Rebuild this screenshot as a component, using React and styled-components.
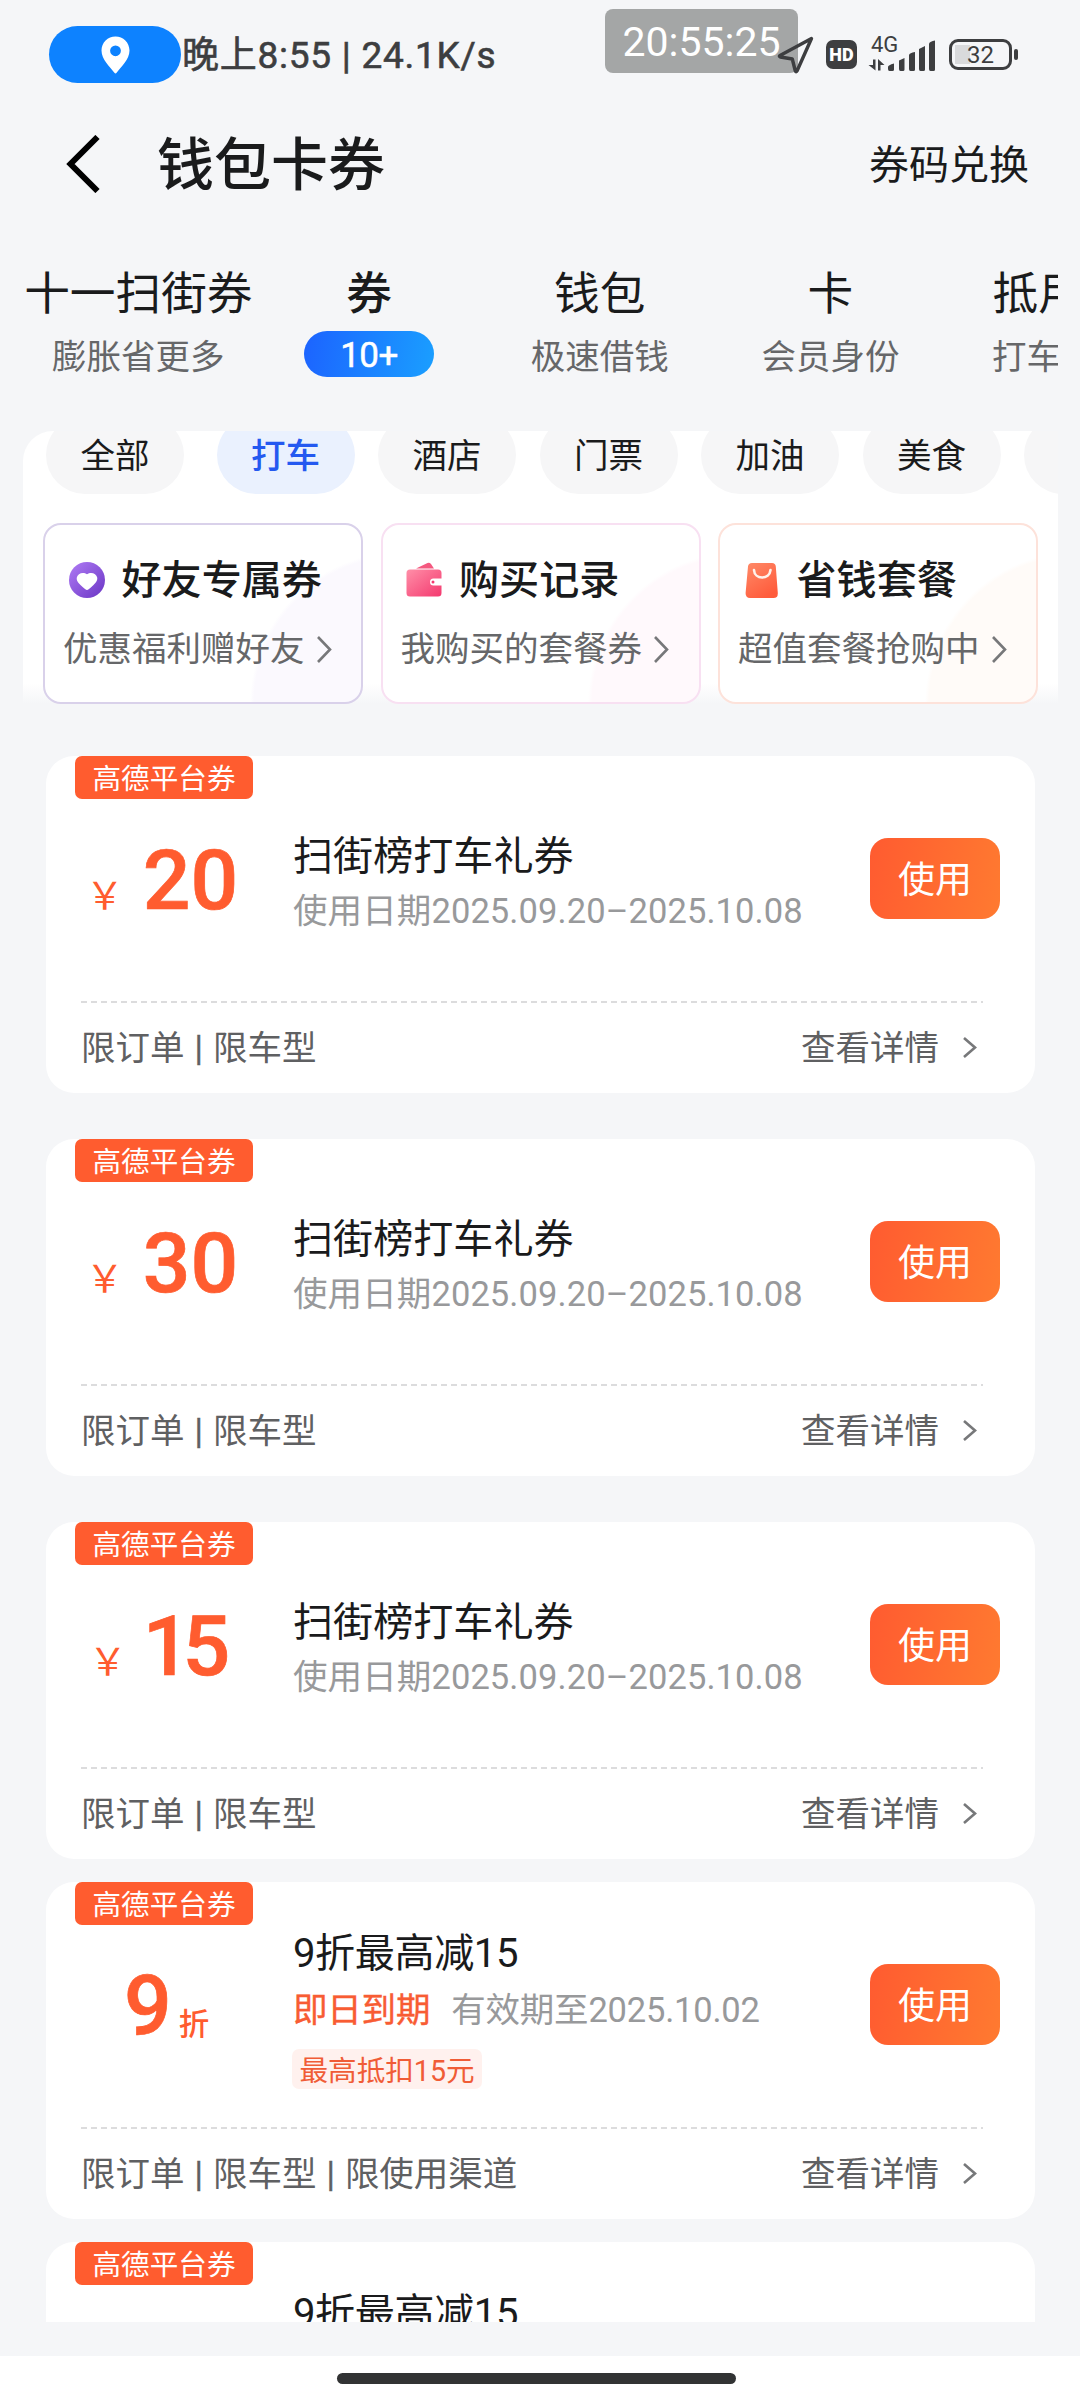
import React from 'react';
import styled, { createGlobalStyle, css } from 'styled-components';

const GlobalStyle = createGlobalStyle`
  * { box-sizing: border-box; }
  body {
    margin: 0;
    background: #f5f6f8;
    font-family: Roboto, "Noto Sans CJK SC", sans-serif;
    color: #1a1b1c;
  }
  button { font-family: inherit; border: 0; padding: 0; }
`;

const Screen = styled.div`
  width: 1080px;
  height: 2400px;
  display: flex;
  flex-direction: column;
  overflow: hidden;
  background: #f5f6f8;
`;

/* ---------- status bar ---------- */

const StatusBar = styled.div`
  position: relative;
  height: 109px;
  flex: none;
  display: flex;
  align-items: center;
  padding: 0 62px 0 49px;
  color: #3d3e40;
`;

const LocationPill = styled.div`
  width: 132px;
  height: 57px;
  border-radius: 29px;
  background: #0d82ff;
  display: flex;
  align-items: center;
  justify-content: center;
`;

const StatusText = styled.span`
  margin-left: 1px;
  font-size: 37px;
  line-height: 56px;
  font-weight: 400;
  -webkit-text-stroke: 0.6px currentColor;
  letter-spacing: 0.75px;
  white-space: pre;
  padding-top: 3px;
`;

const StatusIcons = styled.div`
  margin-left: auto;
  display: flex;
  align-items: center;
  position: relative;
  z-index: 1;
`;

const HdBadge = styled.span`
  width: 31px;
  height: 29px;
  margin-left: 12px;
  border-radius: 7px;
  background: #3d3e40;
  color: #fff;
  font-size: 18px;
  font-weight: 900;
  line-height: 30px;
  text-align: center;
`;

const Signal = styled.div`
  width: 68px;
  height: 34px;
  margin-left: 11px;
  display: grid;
  grid-template-columns: 19px 1fr;
  grid-template-rows: 19px 15px;
`;

const NetworkType = styled.span`
  grid-area: 1 / 1;
  padding-left: 3px;
  font-size: 22px;
  font-weight: 400;
  line-height: 13px;
  letter-spacing: -0.2px;
`;

const DataArrows = styled.svg`
  grid-area: 2 / 1;
`;

const Bars = styled.svg`
  grid-area: 1 / 2 / 3 / 3;
`;

const Battery = styled.div`
  width: 63px;
  height: 31px;
  margin-left: 13px;
  border: 3px solid #3d3e40;
  border-radius: 9px;
  background: linear-gradient(#d9dadc, #d9dadc) 3px 3px / 15px 19px no-repeat;
  font-size: 24px;
  font-weight: 400;
  line-height: 27px;
  text-align: center;
`;

const BatteryTip = styled.span`
  width: 4px;
  height: 11px;
  margin-left: 2px;
  border-radius: 2px;
  background: #3d3e40;
`;

const ClockOverlay = styled.div`
  position: absolute;
  left: 605px;
  top: 9px;
  width: 193px;
  height: 64px;
  border-radius: 8px;
  background: #a4a6a6;
  color: #fff;
  font-size: 41px;
  line-height: 67px;
  text-align: center;
`;

/* ---------- header ---------- */

const Header = styled.header`
  height: 110px;
  flex: none;
  display: flex;
  align-items: center;
  padding: 0 51px 0 66px;
`;

const PageTitle = styled.h1`
  margin: 3px 0 0 56px;
  font-size: 57px;
  line-height: 70px;
  font-weight: 500;
`;

const HeaderAction = styled.span`
  margin: 3px 0 0 auto;
  font-size: 40px;
  line-height: 60px;
`;

/* ---------- tabs ---------- */

const Tabs = styled.nav`
  height: 212px;
  flex: none;
  margin: 0 22px;
  padding: 46px 0 0 1px;
  display: flex;
  overflow: hidden;
`;

const Tab = styled.div`
  width: 230.7px;
  flex: none;
  display: flex;
  flex-direction: column;
  align-items: center;
  white-space: nowrap;
`;

const TabTitle = styled.span`
  font-size: 45.7px;
  line-height: 59px;
  margin-bottom: 7px;
  font-weight: ${(p) => (p.$active ? 500 : 400)};
`;

const TabHint = styled.span`
  font-size: 34.5px;
  line-height: 52px;
  color: #666769;
`;

const TabCount = styled.span`
  width: 130px;
  height: 46px;
  border-radius: 23px;
  background: linear-gradient(100deg, #1c63ff, #1a9fff);
  color: #fff;
  font-size: 35px;
  -webkit-text-stroke: 0.5px currentColor;
  line-height: 49px;
  letter-spacing: -0.5px;
  text-align: center;
`;

/* ---------- filter panel ---------- */

const Panel = styled.section`
  height: 273px;
  flex: none;
  margin: 0 22px 0 23px;
  border-radius: 30px 0 0 0;
  overflow: hidden;
  background: linear-gradient(#fff 0, #fff 252px, #f5f6f8 273px);
`;

const Chips = styled.div`
  display: flex;
  gap: 23.5px;
  margin-top: -15px;
  padding-left: 23px;
`;

const Chip = styled.span`
  width: 138px;
  height: 78px;
  flex: none;
  border-radius: 39px;
  background: #f6f6f7;
  font-size: 34.5px;
  line-height: 81px;
  text-align: center;
  ${(p) =>
    p.$active &&
    css`
      margin-left: 9px;
      background: #eaf1fe;
      color: #2459f0;
      font-weight: 500;
    `}
`;

const Features = styled.div`
  display: flex;
  gap: 17.5px;
  margin-top: 29px;
  padding-left: 20px;
`;

const Feature = styled.div`
  width: 320px;
  height: 181px;
  flex: none;
  border: 2px solid ${(p) => p.$border};
  border-radius: 18px;
  padding: 26px 0 0 18px;
  background: radial-gradient(circle at 357px 179px, ${(p) => p.$tint} 0, ${(p) => p.$tint} 148px, #fff 152px);
`;

const FeatureTitle = styled.div`
  display: flex;
  align-items: center;
  gap: 16px;
  padding-left: 2.5px;
  font-size: 40.1px;
  line-height: 60px;
  font-weight: 500;

  svg { flex: none; margin-top: -3px; }
`;

const FeatureHint = styled.div`
  display: flex;
  align-items: center;
  gap: 12px;
  margin-top: 10px;
  font-size: 34.5px;
  line-height: 56px;
  color: #666769;
`;

/* ---------- coupons ---------- */

const List = styled.main`
  height: 1618px;
  flex: none;
  overflow: hidden;
  padding: 52px 45px 0 46px;
`;

const Coupon = styled.article`
  height: 337px;
  margin-bottom: ${(p) => (p.$tight ? 23 : 46)}px;
  border-radius: 28px;
  background: #fff;
`;

const Source = styled.div`
  width: 178px;
  height: 43px;
  margin-left: 29px;
  border-radius: 7px;
  background: #ff5c2f;
  color: #fff;
  font-size: 28.6px;
  line-height: 46px;
  text-align: center;
`;

const CouponBody = styled.div`
  height: 202px;
  display: flex;
  align-items: flex-start;
  padding-right: 35px;
`;

const Amount = styled.div`
  width: ${(p) => (p.$discount ? 241 : 232)}px;
  margin: 40px ${(p) => (p.$discount ? 6 : 15)}px 0 0;
  display: flex;
  justify-content: center;
  align-items: baseline;
  color: #ff5c2f;
  line-height: 84px;
`;

const Yen = styled.span`
  font-size: 38px;
  margin-right: 19px;
`;

const Value = styled.span`
  font-size: 84px;
  font-weight: 500;
  -webkit-text-stroke: 0.7px currentColor;
  ${(p) =>
    p.$narrow &&
    css`
      letter-spacing: -8px;
      margin: 0 13px 0 -3px;
    `}
`;

const Unit = styled.span`
  font-size: 30.5px;
  font-weight: 500;
  margin-left: 7px;
`;

const Info = styled.div`
  flex: 1;
  padding-top: ${(p) => (p.$dense ? 1 : 30)}px;
`;

const CouponTitle = styled.div`
  font-size: 40.1px;
  line-height: 56px;
  letter-spacing: ${(p) => (p.$dense ? '-0.4px' : '0')};
`;

const Validity = styled.div`
  display: flex;
  gap: 21px;
  margin-top: ${(p) => (p.$dense ? 0 : -2)}px;
  font-size: 34.5px;
  line-height: 56px;
  letter-spacing: ${(p) => (p.$dense ? '-0.2px' : '0.1px')};
  color: #98999b;
`;

const Expiring = styled.span`
  color: #f85c33;
  -webkit-text-stroke: 0.4px currentColor;
`;

const Cap = styled.span`
  display: block;
  width: 190px;
  height: 40px;
  margin: 11px 0 0 -1px;
  border-radius: 7px;
  background: #fff1ee;
  color: #f05c36;
  font-size: 28.6px;
  line-height: 45px;
  text-align: center;
`;

const UseButton = styled.button`
  width: 130px;
  height: 81px;
  margin-top: 39px;
  border-radius: 18px;
  background: linear-gradient(100deg, #ff5b30, #ff7a30);
  color: #fff;
  font-size: 37px;
  line-height: 85px;
`;

const Dashes = styled.div`
  height: 2px;
  margin: 0 52px 0 35px;
  background: repeating-linear-gradient(90deg, #dcdcdd 0 6px, transparent 6px 10px);
`;

const CouponFooter = styled.div`
  display: flex;
  align-items: center;
  justify-content: space-between;
  padding: 17px 58px 0 35px;
  font-size: 34.5px;
  line-height: 56px;
  color: #5f6062;
`;

const Limits = styled.div`
  display: flex;
`;

const Limit = styled.span`
  & + &::before {
    content: '|';
    padding: 0 10px 0 10px;
    -webkit-text-stroke: 0.4px currentColor;
  }
`;

const Details = styled.span`
  display: flex;
  align-items: center;
  gap: 24px;

  svg { margin-top: -1px; }
`;

/* ---------- system navigation ---------- */

const NavSpacer = styled.div`
  height: 34px;
  flex: none;
`;

const HomeArea = styled.footer`
  flex: 1;
  background: #fff;
  display: flex;
  justify-content: center;
  padding: 17px 7px 0 0;
`;

const HomeBar = styled.div`
  width: 399px;
  height: 11px;
  border-radius: 6px;
  background: #323334;
`;

/* ---------- icons ---------- */

const PinIcon = () => (
  <svg width="29" height="38" viewBox="0 0 29 38">
    <path
      fill="#fff"
      fillRule="evenodd"
      d="M14.5 0.5C6.8 0.5 0.5 6.6 0.5 14.6C0.5 23.5 9 31.2 13.4 36.8Q14.5 38 15.6 36.8C20 31.2 28.5 23.5 28.5 14.6C28.5 6.6 22.2 0.5 14.5 0.5ZM14.5 9.4A5.4 5.4 0 1 1 14.5 20.2A5.4 5.4 0 1 1 14.5 9.4Z"
    />
  </svg>
);

const NavArrowIcon = () => (
  <svg width="37" height="38" viewBox="0 0 37 38" fill="none">
    <path d="M34.5 2.5L3 19.5Q1.6 20.5 3.4 21L15.3 23L18.3 35Q19 36.8 20 35Z" stroke="#3d3e40" strokeWidth="3.4" strokeLinejoin="round" />
  </svg>
);

const SignalBars = () => (
  <Bars width="49" height="34" viewBox="0 0 49 34" fill="#3d3e40">
    <path d="M1 31V29Q1 27 7 25.5V31.5Q7 33 5.5 33H2.5Q1 33 1 31Z" />
    <path d="M12 31V22.5L17.5 20V31.5Q17.5 33 16 33H13.5Q12 33 12 31Z" />
    <path d="M22 31V17Q22.5 15 28 14V31.5Q28 33 26.5 33H23.5Q22 33 22 31Z" />
    <path d="M32 31V11L38 8V31.5Q38 33 36.5 33H33.5Q32 33 32 31Z" />
    <path d="M42 31V5.5Q43 3.5 48 2.5V31.5Q48 33 46.5 33H43.5Q42 33 42 31Z" />
  </Bars>
);

const TransferArrows = () => (
  <DataArrows width="18" height="15" viewBox="0 0 18 15" fill="#3d3e40">
    <path d="M5 2.5H7.5V13.5L0.5 8H5Z" />
    <path d="M10 13.5V2L16.5 8H12.5V13.5Z" />
  </DataArrows>
);

const BackIcon = () => (
  <svg width="35" height="58" viewBox="0 0 35 58" fill="none">
    <path d="M31.5 2L4.5 29L31.5 56" stroke="#000" strokeWidth="6" />
  </svg>
);

const Chevron = ({ width, height }) => (
  <svg width={width} height={height} fill="none" stroke="#77787a" strokeWidth="2.6">
    <path d={`M1 1L${width - 2} ${height / 2}L1 ${height - 1}`} />
  </svg>
);

const HeartIcon = () => (
  <svg width="40" height="40" viewBox="0 0 40 40">
    <defs>
      <linearGradient id="heart" x1="0" y1="0" x2="1" y2="1">
        <stop offset="0" stopColor="#b07cf5" />
        <stop offset="1" stopColor="#6a35c4" />
      </linearGradient>
    </defs>
    <circle cx="21" cy="20" r="18" fill="url(#heart)" />
    <path fill="#fff" d="M21 30Q19.6 30 14.5 25C11 21.8 10.5 19.5 10.8 17.5C11.6 13 17.5 11.5 21 14.3C24.5 11.5 30.4 13 31.2 17.5C31.5 19.5 31 21.8 27.5 25Q22.4 30 21 30Z" />
  </svg>
);

const WalletIcon = () => (
  <svg width="40" height="40" viewBox="0 0 40 40">
    <defs>
      <linearGradient id="wallet" x1="0" y1="0" x2="1" y2="1">
        <stop offset="0" stopColor="#ff8fa8" />
        <stop offset="1" stopColor="#f4396f" />
      </linearGradient>
    </defs>
    <path d="M13 8.5L24.5 3Q26.5 2 28 4L31 8.5Z" fill="#f4587f" />
    <path
      fill="url(#wallet)"
      d="M7 9.5H35Q38.5 9.5 38.5 13V18.5H30.5A3.5 3.5 0 0 0 30.5 25.5H38.5V33Q38.5 36.5 35 36.5H7Q3.5 36.5 3.5 33V13Q3.5 9.5 7 9.5Z"
    />
    <circle cx="30" cy="22" r="1.5" fill="#f4396f" />
  </svg>
);

const BagIcon = () => (
  <svg width="40" height="40" viewBox="0 0 40 40">
    <defs>
      <linearGradient id="bag" x1="0" y1="0" x2="0.6" y2="1">
        <stop offset="0" stopColor="#ff8a68" />
        <stop offset="1" stopColor="#ff5c3c" />
      </linearGradient>
    </defs>
    <path d="M11 3H31Q34.5 3 34.8 6.5L36.8 33Q37 38 32.5 38H9Q4.5 38 4.6 33L7 6.5Q7.3 3 11 3Z" fill="url(#bag)" />
    <path d="M13 10C13.5 20 28.5 20 29.5 10" fill="none" stroke="#fff1ea" strokeWidth="2.6" strokeLinecap="round" />
  </svg>
);

/* ---------- data ---------- */

const tabs = [
  { title: '十一扫街券', hint: '膨胀省更多' },
  { title: '券', count: '10+' },
  { title: '钱包', hint: '极速借钱' },
  { title: '卡', hint: '会员身份' },
  { title: '抵用金', hint: '打车抵现' },
];

const chips = ['全部', '打车', '酒店', '门票', '加油', '美食', ''];

const features = [
  { title: '好友专属券', hint: '优惠福利赠好友', Icon: HeartIcon, border: '#d9d1ea', tint: '#fbf9fe' },
  { title: '购买记录', hint: '我购买的套餐券', Icon: WalletIcon, border: '#f8e0f2', tint: '#fff9fc' },
  { title: '省钱套餐', hint: '超值套餐抢购中', Icon: BagIcon, border: '#fde2da', tint: '#fffbf8' },
];

const ride = { title: '扫街榜打车礼券', period: '使用日期2025.09.20–2025.10.08', limits: ['限订单', '限车型'] };
const discount = {
  title: '9折最高减15',
  value: '9',
  unit: '折',
  expiring: '即日到期',
  period: '有效期至2025.10.02',
  cap: '最高抵扣15元',
  limits: ['限订单', '限车型', '限使用渠道'],
  tight: true,
};

const coupons = [
  { ...ride, value: '20' },
  { ...ride, value: '30' },
  { ...ride, value: '15', tight: true, narrow: true },
  discount,
  discount,
];

const CouponCard = ({ coupon }) => (
  <Coupon $tight={coupon.tight}>
    <Source>高德平台券</Source>
    <CouponBody>
      <Amount $discount={!!coupon.unit}>
        {!coupon.unit && <Yen>￥</Yen>}
        <Value $narrow={coupon.narrow}>{coupon.value}</Value>
        {coupon.unit && <Unit>{coupon.unit}</Unit>}
      </Amount>
      <Info $dense={!!coupon.cap}>
        <CouponTitle $dense={!!coupon.cap}>{coupon.title}</CouponTitle>
        <Validity $dense={!!coupon.cap}>
          {coupon.expiring && <Expiring>{coupon.expiring}</Expiring>}
          <span>{coupon.period}</span>
        </Validity>
        {coupon.cap && <Cap>{coupon.cap}</Cap>}
      </Info>
      <UseButton>使用</UseButton>
    </CouponBody>
    <Dashes />
    <CouponFooter>
      <Limits>
        {coupon.limits.map((l) => (
          <Limit key={l}>{l}</Limit>
        ))}
      </Limits>
      <Details>
        查看详情
        <Chevron width={14} height={21} />
      </Details>
    </CouponFooter>
  </Coupon>
);

export default function App() {
  return (
    <Screen>
      <GlobalStyle />
      <StatusBar>
        <LocationPill>
          <PinIcon />
        </LocationPill>
        <StatusText>晚上8:55 | 24.1K/s</StatusText>
        <ClockOverlay>20:55:25</ClockOverlay>
        <StatusIcons>
          <NavArrowIcon />
          <HdBadge>HD</HdBadge>
          <Signal>
            <NetworkType>4G</NetworkType>
            <TransferArrows />
            <SignalBars />
          </Signal>
          <Battery>32</Battery>
          <BatteryTip />
        </StatusIcons>
      </StatusBar>

      <Header>
        <BackIcon />
        <PageTitle>钱包卡券</PageTitle>
        <HeaderAction>券码兑换</HeaderAction>
      </Header>

      <Tabs>
        {tabs.map((t) => (
          <Tab key={t.title}>
            <TabTitle $active={!!t.count}>{t.title}</TabTitle>
            {t.count ? <TabCount>{t.count}</TabCount> : <TabHint>{t.hint}</TabHint>}
          </Tab>
        ))}
      </Tabs>

      <Panel>
        <Chips>
          {chips.map((c) => (
            <Chip key={c} $active={c === '打车'}>
              {c}
            </Chip>
          ))}
        </Chips>
        <Features>
          {features.map(({ title, hint, Icon, border, tint }) => (
            <Feature key={title} $border={border} $tint={tint}>
              <FeatureTitle>
                <Icon />
                {title}
              </FeatureTitle>
              <FeatureHint>
                {hint}
                <Chevron width={15} height={27} />
              </FeatureHint>
            </Feature>
          ))}
        </Features>
      </Panel>

      <List>
        {coupons.map((c, i) => (
          <CouponCard key={i} coupon={c} />
        ))}
      </List>

      <NavSpacer />
      <HomeArea>
        <HomeBar />
      </HomeArea>
    </Screen>
  );
}
